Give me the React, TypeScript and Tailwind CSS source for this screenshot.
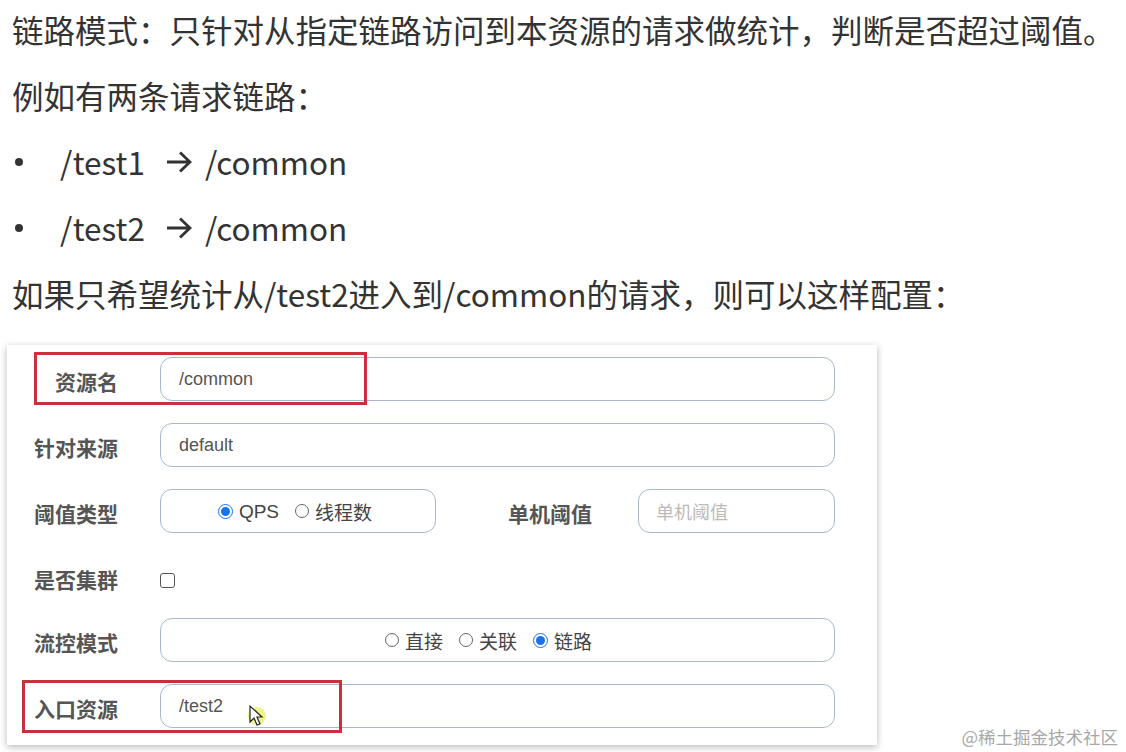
import React from "react";

const cjk = { fontFamily: '"Noto Sans CJK SC", "Noto Sans", sans-serif' };
const arial = { fontFamily: '"Liberation Sans", "Noto Sans CJK SC", sans-serif' };

function Radio({ checked, label }: { checked?: boolean; label: string }) {
  return (
    <span className="flex items-center">
      {checked ? (
        <span className="flex h-[15px] w-[15px] items-center justify-center rounded-full border-[1.5px] border-[#1a73e8] bg-white">
          <span className="h-[9px] w-[9px] rounded-full bg-[#1a73e8]" />
        </span>
      ) : (
        <span className="h-[14px] w-[14px] rounded-full border-[1.5px] border-[#666] bg-white" />
      )}
      <span className="ml-[6px] pt-[3px] text-[19px] text-[#444]">{label}</span>
    </span>
  );
}

function Label({ children }: { children: React.ReactNode }) {
  return (
    <div className="w-[111px] shrink-0 whitespace-nowrap pt-[9px] text-right text-[21px] font-bold text-[#555]" style={cjk}>
      {children}
    </div>
  );
}

function Box({ children, className = "" }: { children?: React.ReactNode; className?: string }) {
  return (
    <div
      className={
        "flex h-[44px] items-center rounded-[12px] border-[1.5px] border-[#a9b9c9] bg-white " + className
      }
    >
      {children}
    </div>
  );
}

function Arrow() {
  return (
    <svg width="26" height="22" viewBox="0 0 26 22" className="ml-[21px]">
      <path d="M1 11 H24 M14 1.5 L24 11 L14 20.5" fill="none" stroke="#333" strokeWidth="2.8" />
    </svg>
  );
}

function Cursor() {
  return (
    <svg width="24" height="26" viewBox="0 0 24 26" className="absolute left-[240px] top-[359px]">
      <circle cx="10" cy="12" r="9" fill="#e8f060" opacity="0.75" />
      <path d="M3 2 L3 18 L7 14 L10 21 L13 20 L10 13 L15 13 Z" fill="#fff" stroke="#222" strokeWidth="1.2" />
    </svg>
  );
}

export default function App() {
  return (
    <div className="relative h-[752px] w-[1126px] overflow-hidden bg-white" style={cjk}>
      <div className="flex flex-col gap-[6px] pl-[12px] text-[31.5px] text-[#333]">
        <div className="flex h-[60px] items-center whitespace-nowrap">
          链路模式：只针对从指定链路访问到本资源的请求做统计，判断是否超过阈值。
        </div>
        <div className="flex h-[60px] items-center">例如有两条请求链路：</div>
        {["/test1", "/test2"].map((t) => (
          <div key={t} className="flex h-[60px] items-center">
            <span className="ml-[3px] h-[8px] w-[8px] rounded-full bg-[#333]" />
            <span className="ml-[37px]">{t}</span>
            <Arrow />
            <span className="ml-[13px]">/common</span>
          </div>
        ))}
        <div className="flex h-[60px] items-center whitespace-nowrap">
          如果只希望统计从/test2进入到/common的请求，则可以这样配置：
        </div>
      </div>

      <div className="relative ml-[7px] mt-[21px] w-[870px] bg-white pb-[17px] pr-[42px] pt-[12px] shadow-[0_2px_7px_rgba(0,0,0,0.28)]">
        <div className="flex flex-col gap-[22px]">
          <div className="flex">
            <Label>资源名</Label>
            <Box className="ml-[42px] flex-1 pl-[18px]">
              <span className="text-[18px] text-[#555]" style={arial}>/common</span>
            </Box>
          </div>
          <div className="flex">
            <Label>针对来源</Label>
            <Box className="ml-[42px] flex-1 pl-[18px]">
              <span className="text-[18px] text-[#555]" style={arial}>default</span>
            </Box>
          </div>
          <div className="flex">
            <Label>阈值类型</Label>
            <Box className="ml-[42px] w-[276px] justify-center gap-[16px] pr-[6px]">
              <span style={arial} className="flex">
                <Radio checked label="QPS" />
              </span>
              <Radio label="线程数" />
            </Box>
            <div className="ml-[72px] w-[88px] shrink-0 whitespace-nowrap pt-[9px] text-[21px] font-bold text-[#555]">
              单机阈值
            </div>
            <Box className="ml-[42px] flex-1 pl-[17px]">
              <span className="text-[18px] text-[#bbb]">单机阈值</span>
            </Box>
          </div>
          <div className="flex h-[41px]">
            <Label>是否集群</Label>
            <div className="ml-[42px] mt-[18px] h-[15px] w-[15px] rounded-[3px] border-[1.5px] border-[#555]" />
          </div>
          <div className="flex">
            <Label>流控模式</Label>
            <Box className="ml-[42px] flex-1 justify-center gap-[16px] pr-[18px]">
              <Radio label="直接" />
              <Radio label="关联" />
              <Radio checked label="链路" />
            </Box>
          </div>
          <div className="flex">
            <Label>入口资源</Label>
            <Box className="ml-[42px] flex-1 pl-[18px]">
              <span className="text-[18px] text-[#555]" style={arial}>/test2</span>
            </Box>
          </div>
        </div>

        <div className="absolute left-[27px] top-[7px] h-[53px] w-[333px] border-[3px] border-[#c8303c]" />
        <div className="absolute left-[15px] top-[335px] h-[53px] w-[320px] border-[3px] border-[#c8303c]" />
        <Cursor />
      </div>

      <div className="absolute right-[8px] top-[724px] text-[17.5px] text-[#a8a8a8]">@稀土掘金技术社区</div>
    </div>
  );
}
